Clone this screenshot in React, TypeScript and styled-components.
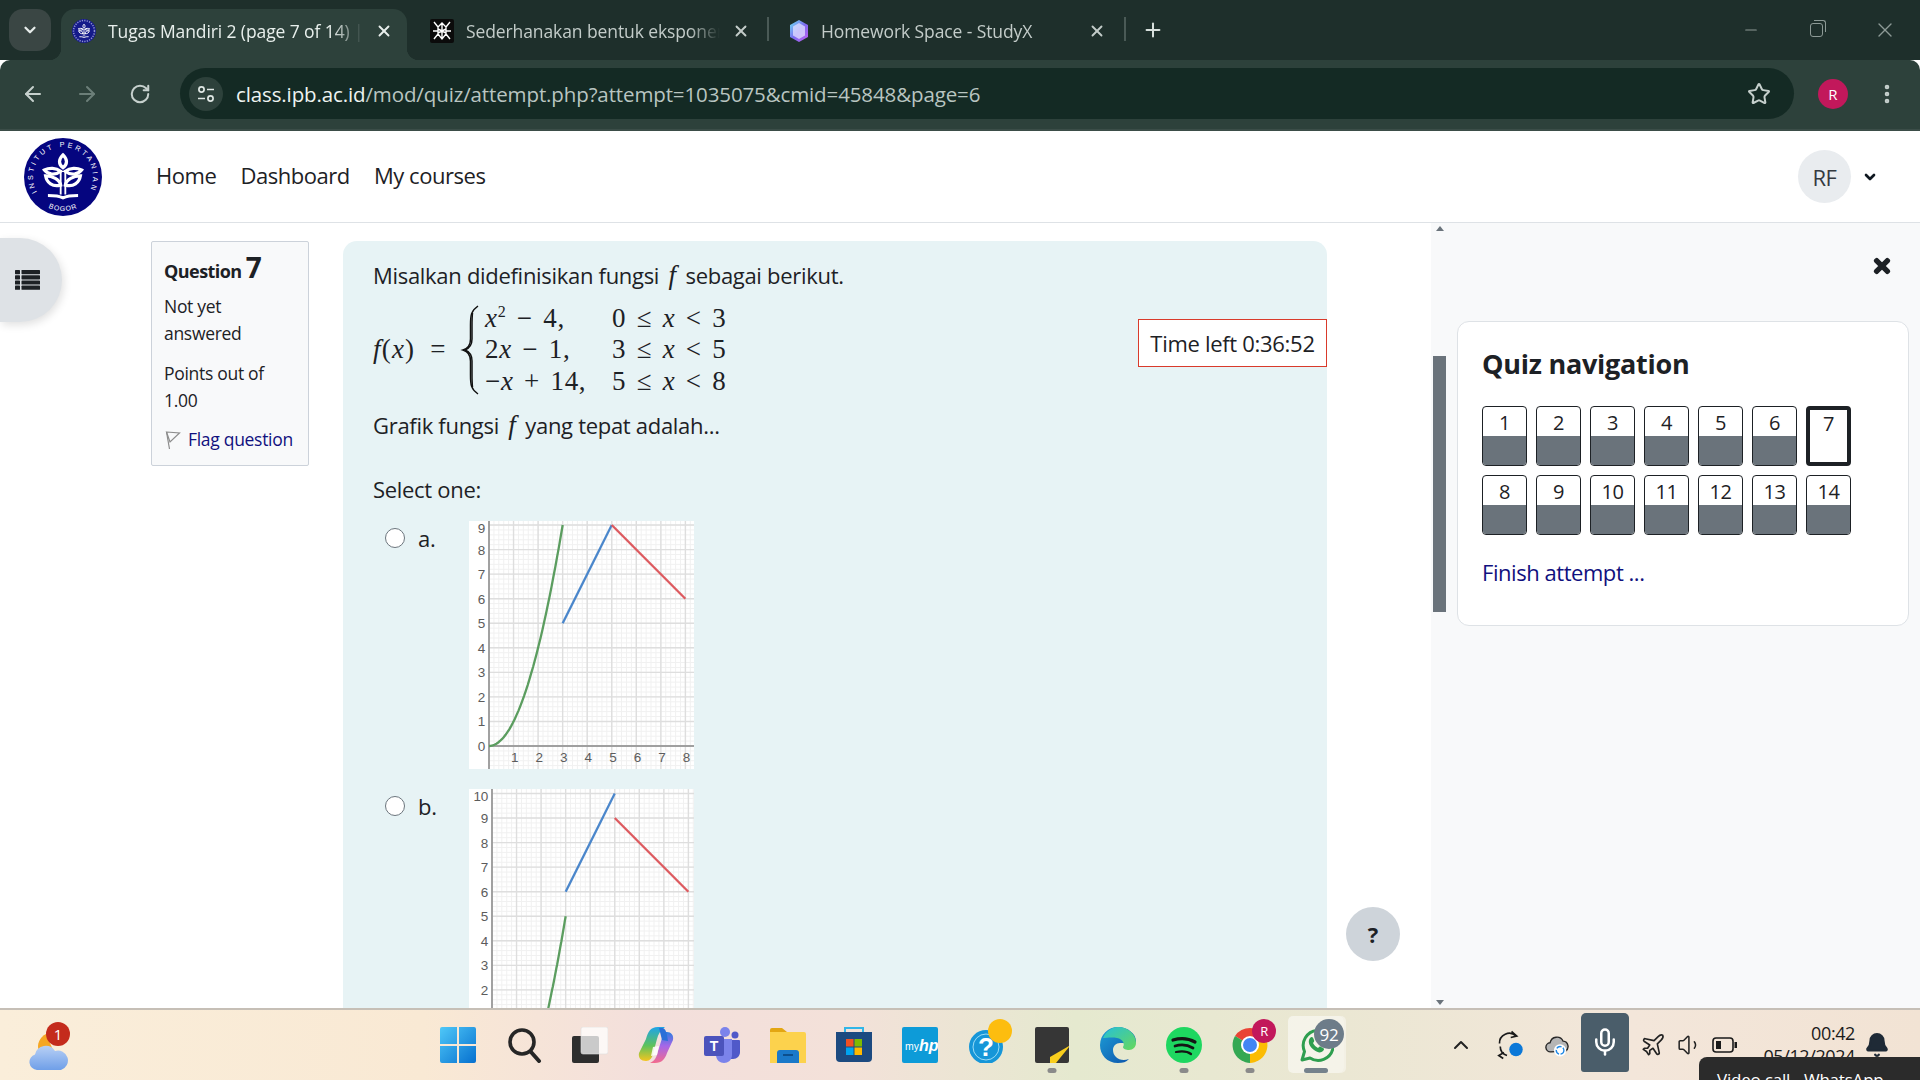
import React from "react";
import styled, { createGlobalStyle } from "styled-components";
import { ArrowLeft, ArrowRight, RotateCw, Star, X, Plus, Minus, EllipsisVertical, ChevronDown, ChevronUp, Mic, Plane, Bell, Volume1 } from "lucide-react";
import { FaTimes } from "react-icons/fa";

const UI = `"Open Sans", "Noto Sans", sans-serif`;
const Global = createGlobalStyle`
  html, body { margin: 0; width: 1920px; height: 1080px; overflow: hidden; background: #fff; }
  #root { width: 1920px; height: 1080px; }
  * { box-sizing: border-box; }
`;
const Screen = styled.div`display:flex;flex-direction:column;width:1920px;height:1080px;font-family:${UI};color:#1d2125;overflow:hidden;`;

/* ---------- browser chrome ---------- */
const TabStrip = styled.div`display:flex;align-items:flex-end;height:60px;background:#1e2f2b;padding-left:9px;position:relative;`;
const TabsMenu = styled.div`width:42px;height:42px;margin:0 10px 9px 0;border-radius:14px;background:#3a4644;display:flex;align-items:center;justify-content:center;color:#e6ecea;`;
const Tab = styled.div<{ $w: number; $pl: number; $pr: number; $active?: boolean }>`
  width:${p => p.$w}px;height:51px;display:flex;align-items:center;padding:0 ${p => p.$pr}px 7px ${p => p.$pl}px;gap:12px;position:relative;
  color:${p => (p.$active ? "#e8efec" : "#c3ccc9")};
  ${p => p.$active ? `background:#2d413b;border-radius:14px 14px 0 0;
    &::before,&::after{content:"";position:absolute;bottom:0;width:12px;height:12px;}
    &::before{left:-12px;background:radial-gradient(circle at 0 0,transparent 12px,#2d413b 12.5px);}
    &::after{right:-12px;background:radial-gradient(circle at 100% 0,transparent 12px,#2d413b 12.5px);}` : ""}
`;
const TabSep = styled.div`width:2px;height:24px;background:#4a5a56;margin-bottom:19px;flex:none;`;
const TabTitle = styled.div`flex:1;min-width:0;white-space:nowrap;overflow:hidden;font-size:17.5px;letter-spacing:-.1px;
  mask-image:linear-gradient(90deg,#000 88%,transparent 100%);`;
const NewTab = styled.div`margin:0 0 19px 16px;color:#d8e0dd;display:flex;`;
const WinBtns = styled.div`margin-left:auto;display:flex;align-items:center;height:60px;color:#8d9a96;padding-right:23px;gap:50px;`;
const RestoreGlyph = styled.div`width:13px;height:14px;border:1.5px solid #8d9a96;border-radius:3px;position:relative;
  &::after{content:"";position:absolute;top:-4px;right:-4px;width:11px;height:11px;border-top:1.5px solid #8d9a96;border-right:1.5px solid #8d9a96;border-radius:0 3px 0 0;}`;

const Toolbar = styled.div`height:71px;background:#2d413b;border-radius:10px 10px 0 0;border-bottom:2px solid #3b4d48;display:flex;align-items:center;padding-bottom:2px;`;
const NavIcons = styled.div`display:flex;align-items:center;gap:30px;padding-left:21px;width:180px;`;
const NavIcon = styled.span<{ $dim?: boolean }>`display:flex;color:${p => (p.$dim ? "#6c7f79" : "#c6d0cd")};`;
const Omnibox = styled.div`width:1614px;height:51px;border-radius:26px;background:#142a24;display:flex;align-items:center;padding:0 23px 0 9px;`;
const SiteBtn = styled.div`width:34px;height:34px;border-radius:50%;background:#2d413b;display:flex;align-items:center;justify-content:center;margin-right:13px;`;
const Url = styled.div`font-size:20.5px;letter-spacing:-.12px;color:#b9c5c1;white-space:nowrap;flex:1;`;
const Host = styled.span`color:#eef3f1;`;
const ProfileDot = styled.div`width:30px;height:30px;border-radius:50%;background:#c2185b;color:#fff;font-size:15px;display:flex;align-items:center;justify-content:center;margin-left:24px;`;
const Kebab = styled.span`display:flex;color:#c6d0cd;margin-left:27px;`;

/* ---------- site header ---------- */
const Header = styled.header`height:92px;border-bottom:1px solid #dee2e6;background:#fff;display:flex;align-items:center;padding:0 42px 0 24px;flex:none;`;
const Menu = styled.nav`display:flex;gap:24px;margin-left:54px;font-size:22px;letter-spacing:-.45px;margin-bottom:4px;`;
const MenuLink = styled.a`color:#1d2125;`;
const UserMenu = styled.div`margin-left:auto;display:flex;align-items:center;gap:11px;`;
const Avatar = styled.div`width:53px;height:53px;border-radius:50%;background:#e9ecef;display:flex;align-items:center;justify-content:center;font-size:22px;letter-spacing:-.5px;color:#343a40;`;

/* ---------- main ---------- */
const Main = styled.main`flex:1;min-height:0;display:flex;overflow:hidden;`;
const Region = styled.section`width:1431px;position:relative;padding:18px 0 0 151px;display:flex;align-items:flex-start;gap:34px;overflow:hidden;`;
const BlocksToggle = styled.div`position:absolute;left:0;top:15px;width:62px;height:84px;border-radius:0 42px 42px 0;background:#dee2e6;box-shadow:2px 3px 8px rgba(0,0,0,.12);display:flex;align-items:center;justify-content:center;padding-right:8px;color:#1d2125;`;
const QInfo = styled.aside`width:158px;height:225px;flex:none;background:#f8f9fa;border:1px solid #ccd2da;border-radius:2px;padding:9px 12px;font-size:17.5px;line-height:27px;letter-spacing:-.3px;`;
const QNo = styled.h3`margin:0 0 6px;font-size:18px;font-weight:700;line-height:32px;letter-spacing:-.55px;`;
const QNum = styled.span`font-size:28px;margin-left:4px;font-weight:700;letter-spacing:0;`;
const QState = styled.p`margin:0 0 13px;`;
const Flag = styled.div`display:flex;align-items:center;gap:6px;color:#10107e;white-space:nowrap;margin-top:-1px;`;

const Panel = styled.article`width:984px;height:900px;flex:none;background:#e7f3f5;border-radius:14px 14px 0 0;position:relative;padding:17px 30px;font-size:22px;letter-spacing:-.3px;line-height:34px;`;
const Para = styled.p`margin:0;`;
const MathF = styled.i`font-family:"Liberation Serif",serif;font-size:27px;margin:0 4px;letter-spacing:0;`;
const Formula = styled.div`display:flex;align-items:center;height:96px;margin:10px 0 10px;font-family:"Liberation Serif",serif;font-size:27px;letter-spacing:.7px;word-spacing:3px;line-height:31.5px;`;
const Lhs = styled.div`width:87px;white-space:nowrap;letter-spacing:1.2px;word-spacing:7px;`;
const Brace = styled.svg`width:22px;height:90px;flex:none;margin-right:3px;`;
const Cases = styled.div`display:grid;grid-template-columns:127px auto;`;
const Sup = styled.sup`font-size:16px;line-height:0;`;
const Timer = styled.div`position:absolute;right:0;top:78px;width:189px;height:48px;background:#fff;border:1.5px solid #d93a2b;display:flex;align-items:center;justify-content:center;padding-bottom:1px;font-size:22px;letter-spacing:-.3px;`;
const SelectOne = styled.div`margin-top:30px;`;
const Answer = styled.div<{ $top: number }>`display:flex;align-items:flex-start;margin-top:${p => p.$top}px;height:auto;`;
const RadioDot = styled.span`width:20px;height:20px;border-radius:50%;background:#fff;border:1.5px solid #6c757d;margin:7px 13px 0 12px;flex:none;`;
const AnsLabel = styled.span`width:51px;flex:none;line-height:34px;font-size:22px;`;
const Chart = styled.svg`background:#fff;display:block;flex:none;`;
const HelpBtn = styled.div`position:absolute;left:1346px;top:684px;width:54px;height:54px;border-radius:50%;background:#ced4da;display:flex;align-items:center;justify-content:center;font-weight:700;font-size:22px;color:#1d2125;`;

/* ---------- drawer ---------- */
const Drawer = styled.aside`width:489px;background:#f8f9fa;display:flex;flex:none;`;
const Scrollbar = styled.div`width:16px;height:100%;display:flex;flex-direction:column;align-items:center;padding:3px 0 3px 1px;flex:none;`;
const ScrollUp = styled.div`width:0;height:0;border-left:4px solid transparent;border-right:4px solid transparent;border-bottom:5px solid #6a737b;`;
const ScrollDown = styled(ScrollUp)`border-bottom:0;border-top:5px solid #6a737b;margin-top:auto;`;
const Thumb = styled.div`width:13px;height:256px;background:#6a737b;margin-top:125px;`;
const DrawerBody = styled.div`flex:1;padding:0 11px 0 10px;`;
const CloseRow = styled.div`height:98px;display:flex;justify-content:flex-end;padding:32px 16px 0 0;color:#1d2125;`;
const NavCard = styled.div`height:305px;border:1.5px solid #dee2e6;border-radius:12px;background:#fff;padding:24px 24px;`;
const NavTitle = styled.h2`margin:0 0 24px;font-size:27px;line-height:36px;font-weight:700;letter-spacing:-.25px;color:#1d2125;`;
const QGrid = styled.div`display:grid;grid-template-columns:repeat(7,45px);gap:9px;`;
const QBtn = styled.div<{ $cur?: boolean }>`height:60px;border:${p => (p.$cur ? "4px" : "1px")} solid #1d2125;border-radius:4px;overflow:hidden;display:flex;flex-direction:column;background:#fff;font-size:20px;letter-spacing:-.5px;`;
const QLabel = styled.div<{ $cur?: boolean }>`height:${p => (p.$cur ? "26px" : "29px")};display:flex;align-items:center;justify-content:center;padding-top:${p => (p.$cur ? "0" : "1px")};`;
const QFill = styled.div<{ $cur?: boolean }>`flex:1;background:${p => (p.$cur ? "#fff" : "#6a737b")};`;
const Finish = styled.a`display:block;margin-top:20px;color:#10107e;font-size:22px;letter-spacing:-.45px;line-height:34px;`;

/* ---------- taskbar ---------- */
const Taskbar = styled.footer`height:72px;flex:none;border-top:2px solid #c6bfb6;position:relative;display:flex;
  background:linear-gradient(90deg,#faeeda 0%,#f9e9d4 22%,#f3dfdc 34%,#f3e1d9 44%,#e5e9cf 56%,#ebe7d3 70%,#f3e6da 85%,#f2e3d4 100%);`;
const WeatherSlot = styled.div`width:440px;padding:14px 0 0 28px;flex:none;`;
const Apps = styled.div`display:flex;gap:30px;padding-top:17px;`;
const AppIcon = styled.div<{ $hover?: boolean }>`width:36px;height:36px;position:relative;flex:none;
  ${p => p.$hover ? `&::before{content:"";position:absolute;left:-10px;right:-10px;top:-11px;height:57px;background:rgba(255,255,255,.5);border-radius:5px;box-shadow:2px 0 0 rgba(255,255,255,.4);}` : ""}
  & > svg{position:relative;display:block;}`;
const Dot = styled.span<{ $wide?: boolean }>`position:absolute;bottom:-10px;left:50%;transform:translateX(-50%);height:5px;border-radius:3px;width:${p => (p.$wide ? "24px" : "9px")};background:${p => (p.$wide ? "#75828c" : "#8a8a8a")};`;
const Badge = styled.span<{ $bg: string; $l: number; $t: number; $d: number; $fs: number }>`position:absolute;left:${p => p.$l}px;top:${p => p.$t}px;width:${p => p.$d}px;height:${p => p.$d}px;border-radius:50%;background:${p => p.$bg};color:#fff;font-size:${p => p.$fs}px;display:flex;align-items:center;justify-content:center;letter-spacing:-.3px;`;
const Tray = styled.div`margin-left:auto;padding-right:22px;display:flex;align-items:center;height:70px;`;
const Slot = styled.div<{ $w: number }>`width:${p => p.$w}px;display:flex;justify-content:center;align-items:center;color:#222;flex:none;`;
const MicBox = styled.div`width:48px;height:59px;margin:-6px 0 0 12px;border-radius:5px 5px 3px 3px;background:#4a5d6a;color:#fff;display:flex;align-items:center;justify-content:center;flex:none;`;
const Clock = styled.div`width:108px;font-size:18px;line-height:23px;text-align:right;letter-spacing:-.4px;color:#1b1b1b;flex:none;margin-top:-1px;`;
const Popup = styled.div`position:absolute;right:0;bottom:0;width:221px;height:23px;background:#2b2b2b;border-radius:8px 0 0 0;color:#fff;font-size:17px;padding:13px 0 0 18px;line-height:20px;overflow:hidden;white-space:nowrap;letter-spacing:-.2px;`;

/* ---------- drawings ---------- */
const LeafMark = () => (
  <g fill="none" stroke="#fff" strokeWidth="2.8" transform="translate(39 39) scale(1.16) translate(-39 -38)">
    <path d="M39 19c-4 4-4 8 0 11 4-3 4-7 0-11z" />
    <path d="M37 33c-4-3-10-3-14-1 3 4 9 5 14 1zM41 33c4-3 10-3 14-1-3 4-9 5-14 1z" />
    <path d="M37 45c-1-5-7-8-13-8 1 6 6 10 13 8zM41 45c1-5 7-8 13-8-1 6-6 10-13 8z" />
    <path d="M37 32v21M41 32v21" strokeWidth="1.6" />
    <path d="M26 54c5 0 9 0 13 2 4-2 8-2 13-2" strokeWidth="2.6" />
  </g>
);
const Logo = () => (
  <svg width="78" height="78" viewBox="0 0 78 78" style={{ flex: "none" }}>
    <circle cx="39" cy="39" r="39" fill="#05057f" />
    <defs>
      <path id="arcTop" d="M13 54A30 30 0 1 1 65 54" />
      <path id="arcBot" d="M19.500 66.900A34 34 0 0 0 58.500 66.900" />
    </defs>
    <text fontFamily="Liberation Sans" fontSize="7.200" fill="#fff" textLength="122">
      <textPath href="#arcTop" textLength="122">INSTITUT PERTANIAN</textPath>
    </text>
    <text fontFamily="Liberation Sans" fontSize="7" fill="#fff" textAnchor="middle" letterSpacing=".8">
      <textPath href="#arcBot" startOffset="50%">BOGOR</textPath>
    </text>
    <LeafMark />
  </svg>
);
const LogoFav = () => (
  <svg width="24" height="24" viewBox="0 0 78 78" style={{ flex: "none" }}>
    <circle cx="39" cy="39" r="39" fill="#151a8a" />
    <circle cx="39" cy="39" r="34" fill="none" stroke="#8f93cf" strokeWidth="5" strokeDasharray="4 4" />
    <LeafMark />
  </svg>
);
const SpiderFav = () => (
  <svg width="24" height="24" viewBox="0 0 24 24" style={{ flex: "none" }}>
    <rect width="24" height="24" fill="#0b0b0b" rx="2" />
    <g stroke="#fff" strokeWidth="1.4" fill="none">
      <path d="M12 4l-4 4v7l4 5 4-5V8zM8 8 4 3M16 8l4-5M8 12H3M16 12h5M8 15l-4 5M16 15l4 5M12 4v16M8 10l8 4M16 10l-8 4" />
    </g>
  </svg>
);
const CubeFav = () => (
  <svg width="20" height="24" viewBox="0 0 20 24" style={{ flex: "none" }}>
    <defs><linearGradient id="cube" x1="0" y1="0" x2="1" y2="1"><stop offset="0" stopColor="#6fe3f2" /><stop offset=".5" stopColor="#7c6cf0" /><stop offset="1" stopColor="#c45cf2" /></linearGradient></defs>
    <path d="M10 1l9 5v12l-9 5-9-5V6z" fill="url(#cube)" />
    <path d="M10 4l6 3.500v9L10 20l-6-3.500v-9z" fill="#e4e2ff" opacity=".75" />
  </svg>
);
const SiteIcon = () => (
  <svg width="20" height="20" viewBox="0 0 20 20" fill="none" stroke="#dfe7e4" strokeWidth="1.700">
    <circle cx="5.500" cy="5.500" r="2.600" /><path d="M11 5.500h7M2 14.500h7" /><circle cx="14.500" cy="14.500" r="2.600" />
  </svg>
);
const FlagIcon = () => (
  <svg width="18" height="26" viewBox="0 0 18 26" fill="none" stroke="#8c8c8c" strokeWidth="1.200" style={{ flex: "none" }}>
    <path d="M2.500 5l3 17" /><path d="M2.500 5l13 1-9.500 9z" />
  </svg>
);
const ListIcon = () => (
  <svg width="25" height="20" viewBox="0 0 25 20" fill="#1d2125">
    {[0, 5.200, 10.400, 15.600].map(y => (
      <g key={y}><rect x="0" y={y} width="5" height="4.200" rx=".6" /><rect x="6.500" y={y} width="18.500" height="4.200" rx=".6" /></g>
    ))}
  </svg>
);
const BraceShape = () => (
  <Brace viewBox="0 0 22 90" fill="none" stroke="#111" >
    <path d="M18 1C11 6 10.500 10 10.500 20V34C10.500 40 8 43.500 3 45 8 46.500 10.500 50 10.500 56V70C10.500 80 11 84 18 89" strokeWidth="1.500" />
    <path d="M12.500 8C12 12 12 16 12 22V34C12 39 10 43 5 45 10 47 12 51 12 56V68C12 74 12 78 12.500 82" strokeWidth="1.500" />
  </Brace>
);

type ChartCfg = { w: number; h: number; ox: number; oy: number; top: number; curve: string; blue: string; red: string; xLabels?: boolean };
const UX = 24.55, UY = 24.55;
const GraphChart: React.FC<ChartCfg> = ({ w, h, ox, oy, top, curve, blue, red, xLabels }) => {
  const minorV: number[] = [], minorH: number[] = [], majorV: number[] = [], majorH: number[] = [];
  for (let i = 0; i < 55; i++) { minorV.push(ox + (i * UX) / 5); if (i % 5 === 0) majorV.push(ox + (i * UX) / 5); }
  for (let i = -10; i < 60; i++) { minorH.push(oy - (i * UY) / 5); if (i % 5 === 0) majorH.push(oy - (i * UY) / 5); }
  const gx = (x: number) => ox + x * UX, gy = (y: number) => oy - y * UY;
  const path = (fn: (t: number) => number, a: number, b: number) => {
    let d = "";
    for (let i = 0; i <= 40; i++) { const x = a + ((b - a) * i) / 40; d += `${i ? "L" : "M"}${gx(x).toFixed(1)} ${gy(fn(x)).toFixed(1)}`; }
    return d;
  };
  const isA = curve === "a";
  const ticks = Array.from({ length: top + 1 }, (_, i) => i).filter(i => isA || i >= 2);
  return (
    <Chart width={w} height={h} viewBox={`0 0 ${w} ${h}`}>
      {minorV.map(v => <line key={"a" + v} x1={v} x2={v} y1={0} y2={h} stroke="#f1f1f1" />)}
      {minorH.map(v => <line key={"b" + v} x1={ox} x2={w} y1={v} y2={v} stroke="#f1f1f1" />)}
      {majorV.map(v => <line key={"c" + v} x1={v} x2={v} y1={0} y2={h} stroke="#dedede" strokeWidth="1.400" />)}
      {majorH.map(v => <line key={"d" + v} x1={ox} x2={w} y1={v} y2={v} stroke="#dedede" strokeWidth="1.400" />)}
      <line x1={ox} x2={ox} y1={0} y2={h} stroke="#8a8a8a" strokeWidth="1.500" />
      <line x1={ox} x2={w} y1={oy} y2={oy} stroke="#8a8a8a" strokeWidth="1.500" />
      {ticks.map(i => (
        <text key={i} x={ox - 4} y={Math.max(gy(i) + 5, 12)} textAnchor="end" fontFamily="Liberation Sans" fontSize="13.500" fill="#5c5c5c">{i}</text>
      ))}
      {xLabels && [1, 2, 3, 4, 5, 6, 7, 8].map(i => (
        <text key={i} x={gx(i) + 1} y={oy + 16} textAnchor="middle" fontFamily="Liberation Sans" fontSize="13.500" fill="#5c5c5c">{i}</text>
      ))}
      {isA
        ? <path d={path(x => x * x, 0, 3)} fill="none" stroke="#5b9d5f" strokeWidth="2.300" />
        : <path d={path(x => x * x - 4, 2, 3)} fill="none" stroke="#5b9d5f" strokeWidth="2.300" />}
      <path d={blue} fill="none" stroke="#4a86cb" strokeWidth="2.300" />
      <path d={red} fill="none" stroke="#dd5a5f" strokeWidth="2.300" />
    </Chart>
  );
};

const WeatherIcon = () => (
  <svg width="42" height="52" viewBox="0 0 42 52">
    <defs><linearGradient id="cl" x1="0" y1="0" x2="0" y2="1"><stop offset="0" stopColor="#b8d0f5" /><stop offset="1" stopColor="#6f9fe8" /></linearGradient></defs>
    <path d="M18 10c-6 3-10 10-7 18l14-2z" fill="#f6a723" />
    <path d="M9 46a8 8 0 0 1-2-15.600A11 11 0 0 1 27 27a8 8 0 0 1 6 19z" fill="url(#cl)" />
  </svg>
);
const WinIcon = () => (
  <svg width="36" height="36" viewBox="0 0 36 36">
    <defs><linearGradient id="wg" x1="0" y1="0" x2="1" y2="1"><stop offset="0" stopColor="#4fc8f8" /><stop offset="1" stopColor="#0670cf" /></linearGradient></defs>
    <path d="M0 2a2 2 0 0 1 2-2h15v17H0zM19 0h15a2 2 0 0 1 2 2v15H19zM0 19h17v17H2a2 2 0 0 1-2-2zM19 19h17v15a2 2 0 0 1-2 2H19z" fill="url(#wg)" />
  </svg>
);
const SearchIcon = () => (
  <svg width="36" height="36" viewBox="0 0 36 36" fill="none" stroke="#262626"><circle cx="16" cy="15" r="12" strokeWidth="3.600" /><path d="M25 25l8 9" strokeWidth="4" strokeLinecap="round" /></svg>
);
const TaskViewIcon = () => (
  <svg width="36" height="36" viewBox="0 0 36 36"><rect x="0" y="9" width="27" height="27" rx="2" fill="#2e2e2e" /><rect x="9" y="0" width="27" height="27" rx="2" fill="#fff" fillOpacity=".75" stroke="#ddd" strokeWidth=".6" /></svg>
);
const CopilotIcon = () => (
  <svg width="36" height="36" viewBox="0 0 36 36">
    <defs>
      <linearGradient id="cp1" x1="0" y1="0" x2="0" y2="1"><stop offset="0" stopColor="#1ea4e9" /><stop offset=".55" stopColor="#5fc25b" /><stop offset="1" stopColor="#f4c51f" /></linearGradient>
      <linearGradient id="cp2" x1="0" y1="0" x2="0" y2="1"><stop offset="0" stopColor="#2b7de0" /><stop offset=".45" stopColor="#a667e8" /><stop offset="1" stopColor="#f36b8d" /></linearGradient>
    </defs>
    <path d="M20 0C12 0 10 5 8 12L1 26c-1 5 2 8 7 8 4 0 6-3 7-7l4-15c1-5 4-9 8-12z" fill="url(#cp1)" />
    <path d="M17 36c7 0 10-4 12-10l6-13c1-5-2-8-6-8h-3L20 24c-1 5-3 10-8 12z" fill="url(#cp2)" />
    <path d="M21 1h3c3 0 4 3 5 7l1 6-6-1z" fill="#2a6fd8" />
    <path d="M15 20l6-1-2 9-6 1z" fill="#fff" opacity=".85" />
  </svg>
);
const TeamsIcon = () => (
  <svg width="36" height="36" viewBox="0 0 36 36">
    <circle cx="21" cy="5" r="5" fill="#7b83eb" /><circle cx="31" cy="8" r="3.500" fill="#5059c9" />
    <path d="M26 13h9a1 1 0 0 1 1 1v11c0 4-3 7-7 7h-3z" fill="#5059c9" />
    <path d="M12 12h16v16c0 5-4 8-8 8s-8-3-8-8z" fill="#7b83eb" />
    <rect x="0" y="9" width="20" height="20" rx="2" fill="#4b53bc" />
    <text x="10" y="24" textAnchor="middle" fontFamily="Liberation Sans" fontWeight="700" fontSize="14" fill="#fff">T</text>
  </svg>
);
const FilesIcon = () => (
  <svg width="36" height="36" viewBox="0 0 36 36">
    <path d="M0 3a2 2 0 0 1 2-2h10l5 4H0z" fill="#e3a612" />
    <path d="M0 5h34a2 2 0 0 1 2 2v29H0z" fill="#fcd24d" />
    <path d="M7 36V26a3 3 0 0 1 3-3h16a3 3 0 0 1 3 3v10z" fill="#1a79c9" />
    <rect x="13" y="27" width="10" height="2" fill="#0c4f8c" />
  </svg>
);
const StoreIcon = () => (
  <svg width="36" height="36" viewBox="0 0 36 36">
    <path d="M9 5V1h18v4" fill="none" stroke="#31b6e8" strokeWidth="2" />
    <path d="M0 5h36v26a4 4 0 0 1-4 4H4a4 4 0 0 1-4-4z" fill="#1c4a80" />
    <rect x="10" y="12" width="7.500" height="7.500" fill="#f25022" /><rect x="18.500" y="12" width="7.500" height="7.500" fill="#7fba00" />
    <rect x="10" y="20.500" width="7.500" height="7.500" fill="#00a4ef" /><rect x="18.500" y="20.500" width="7.500" height="7.500" fill="#ffb900" />
  </svg>
);
const HpIcon = () => (
  <svg width="36" height="36" viewBox="0 0 36 36">
    <rect width="36" height="36" rx="2" fill="#0d9bd8" />
    <text x="3" y="23" fontFamily="Liberation Sans" fontSize="10.500" fill="#fff">my</text>
    <text x="17" y="24" fontFamily="Liberation Sans" fontStyle="italic" fontWeight="700" fontSize="16" fill="#fff">hp</text>
  </svg>
);
const HelpIcon = () => (
  <svg width="36" height="36" viewBox="0 0 36 36">
    <circle cx="18" cy="20" r="17" fill="#1696d8" />
    <circle cx="18" cy="20" r="13" fill="none" stroke="#9adcf5" strokeWidth="1" />
    <text x="18" y="29" textAnchor="middle" fontFamily="Liberation Sans" fontWeight="700" fontSize="26" fill="#fff">?</text>
  </svg>
);
const StickyIcon = () => (
  <svg width="36" height="36" viewBox="0 0 36 36"><path d="M3 0h30a2 2 0 0 1 2 2v32a2 2 0 0 1-2 2H3a2 2 0 0 1-2-2V2a2 2 0 0 1 2-2z" fill="#363636" /><path d="M16 36V30L35 19V20L22 36z" fill="#f9ce1d" /></svg>
);
const EdgeIcon = () => (
  <svg width="36" height="36" viewBox="0 0 36 36">
    <defs>
      <linearGradient id="eg1" x1="0" y1="0" x2="1" y2="1"><stop offset="0" stopColor="#26c0d8" /><stop offset="1" stopColor="#67d85a" /></linearGradient>
      <linearGradient id="eg2" x1="0" y1="0" x2="1" y2="1"><stop offset="0" stopColor="#1ea0d8" /><stop offset="1" stopColor="#0c4fa8" /></linearGradient>
    </defs>
    <path d="M18 0A18 18 0 0 0 0 18c0 10 7 18 18 18 5 0 8-1 11-4-9 3-16-2-16-9 0-4 3-7 7-7s8 1 8 2c4 0 8-1 8-4C36 7 28 0 18 0z" fill="url(#eg2)" />
    <path d="M3 11C6 4 12 0 18 0c10 0 18 7 18 16 0 4-3 7-7 7-3 0-6-1-6-3 2-3 0-8-6-9-5-1-11 0-14 0z" fill="url(#eg1)" />
  </svg>
);
const SpotifyIcon = () => (
  <svg width="36" height="36" viewBox="0 0 36 36" fill="none" stroke="#141414" strokeLinecap="round">
    <circle cx="18" cy="18" r="18" fill="#1ed760" stroke="none" />
    <path d="M7 13c7-2 15-2 22 2" strokeWidth="3.200" /><path d="M9 19c6-2 13-1 18 2" strokeWidth="2.700" /><path d="M10 25c5-1 11-1 15 2" strokeWidth="2.200" />
  </svg>
);
const ChromeIcon = () => (
  <svg width="36" height="36" viewBox="0 0 36 36">
    <path d="M18 18L3 9A18 18 0 0 1 33 9z" fill="#ea4335" />
    <path d="M18 18L3 9A18 18 0 0 0 18 36z" fill="#34a853" />
    <path d="M18 18L18 36A18 18 0 0 0 33 9z" fill="#fbbc04" />
    <circle cx="18" cy="18" r="9" fill="#fff" /><circle cx="18" cy="18" r="7" fill="#4285f4" />
  </svg>
);
const WhatsIcon = () => (
  <svg width="36" height="36" viewBox="0 0 36 36" fill="none">
    <path d="M4 33l2.500-8.500A15 15 0 1 1 12 31z" stroke="#2e9e4f" strokeWidth="3" strokeLinejoin="round" />
    <path d="M12 11c2-2 3-1 4 2 .5 1 0 2-1 3 1 2 3 4 5 5 1-1 2-2 3-1 3 1 4 2 2 4-2 2-5 2-9-1s-7-8-4-12z" fill="#2e9e4f" />
  </svg>
);
const RefreshTray = () => (
  <svg width="28" height="30" viewBox="0 0 36 40" fill="none" stroke="#1a1a1a" strokeWidth="2.200">
    <path d="M4 18A13 13 0 0 1 26 8" /><path d="M20 2l7 6-8 2" />
    <path d="M5 22c0 5 3 10 9 12" /><path d="M9 38l-6-4 7-4" />
    <circle cx="26" cy="26" r="9" fill="#0b78d8" stroke="none" />
  </svg>
);
const CloudTray = () => (
  <svg width="26" height="26" viewBox="0 0 30 34">
    <path d="M7 26a6 6 0 0 1-1-12 9 9 0 0 1 17-2 7 7 0 0 1 3 13z" fill="#b5b5b5" stroke="#262626" strokeWidth="1.800" />
    <circle cx="19" cy="24" r="8" fill="#fff" /><circle cx="19" cy="24" r="5" fill="none" stroke="#1e88e5" strokeWidth="1.800" strokeDasharray="7 2" />
  </svg>
);
const BatteryTray = () => (
  <svg width="26" height="18" viewBox="0 0 26 18" fill="none">
    <rect x="1" y="2" width="20" height="14" rx="3" stroke="#1a1a1a" strokeWidth="1.600" />
    <rect x="4" y="5" width="5" height="8" fill="#1a1a1a" /><rect x="22.500" y="6" width="2.500" height="6" fill="#1a1a1a" />
  </svg>
);

const Qs = Array.from({ length: 14 }, (_, i) => i + 1);
const px = (ox: number, x: number) => ox + x * UX;
const py = (oy: number, y: number) => oy - y * UY;

export default function App() {
  return (
    <Screen>
      <Global />
      <TabStrip>
        <TabsMenu><ChevronDown size={18} strokeWidth={3} /></TabsMenu>
        <Tab $w={346} $pl={11} $pr={14} $active>
          <LogoFav />
          <TabTitle>Tugas Mandiri 2 (page 7 of 14) |</TabTitle>
          <X size={18} strokeWidth={2.5} />
        </Tab>
        <Tab $w={360} $pl={23} $pr={17}>
          <SpiderFav />
          <TabTitle>Sederhanakan bentuk eksponen</TabTitle>
          <X size={18} strokeWidth={2.5} />
        </Tab>
        <TabSep />
        <Tab $w={355} $pl={20} $pr={18}>
          <CubeFav />
          <TabTitle>Homework Space - StudyX</TabTitle>
          <X size={18} strokeWidth={2.5} />
        </Tab>
        <TabSep />
        <NewTab><Plus size={22} strokeWidth={2.2} /></NewTab>
        <WinBtns>
          <Minus size={18} strokeWidth={1.6} />
          <RestoreGlyph />
          <X size={24} strokeWidth={1.4} />
        </WinBtns>
      </TabStrip>
      <Toolbar>
        <NavIcons>
          <NavIcon><ArrowLeft size={24} strokeWidth={2} /></NavIcon>
          <NavIcon $dim><ArrowRight size={24} strokeWidth={2} /></NavIcon>
          <NavIcon><RotateCw size={22} strokeWidth={2.2} /></NavIcon>
        </NavIcons>
        <Omnibox>
          <SiteBtn><SiteIcon /></SiteBtn>
          <Url><Host>class.ipb.ac.id</Host>/mod/quiz/attempt.php?attempt=1035075&amp;cmid=45848&amp;page=6</Url>
          <NavIcon><Star size={24} strokeWidth={2} /></NavIcon>
        </Omnibox>
        <ProfileDot>R</ProfileDot>
        <Kebab><EllipsisVertical size={24} strokeWidth={2.6} /></Kebab>
      </Toolbar>
      <Header>
        <Logo />
        <Menu>
          <MenuLink>Home</MenuLink>
          <MenuLink>Dashboard</MenuLink>
          <MenuLink>My courses</MenuLink>
        </Menu>
        <UserMenu>
          <Avatar>RF</Avatar>
          <ChevronDown size={16} strokeWidth={4} color="#0f1720" />
        </UserMenu>
      </Header>
      <Main>
        <Region>
          <BlocksToggle><ListIcon /></BlocksToggle>
          <QInfo>
            <QNo>Question<QNum>7</QNum></QNo>
            <QState>Not yet<br />answered</QState>
            <QState>Points out of<br />1.00</QState>
            <Flag><FlagIcon />Flag question</Flag>
          </QInfo>
          <Panel>
            <Timer>Time left 0:36:52</Timer>
            <Para>Misalkan didefinisikan fungsi <MathF>f</MathF> sebagai berikut.</Para>
            <Formula>
              <Lhs><i>f</i>(<i>x</i>) =</Lhs>
              <BraceShape />
              <Cases>
                <div><i>x</i><Sup>2</Sup> − 4,</div><div>0 ≤ <i>x</i> &lt; 3</div>
                <div>2<i>x</i> − 1,</div><div>3 ≤ <i>x</i> &lt; 5</div>
                <div>−<i>x</i> + 14,</div><div>5 ≤ <i>x</i> &lt; 8</div>
              </Cases>
            </Formula>
            <Para>Grafik fungsi <MathF>f</MathF> yang tepat adalah...</Para>
            <SelectOne>Select one:</SelectOne>
            <Answer $top={15}>
              <RadioDot />
              <AnsLabel>a.</AnsLabel>
              <GraphChart w={225} h={248} ox={20} oy={225} top={9} curve="a" xLabels
                blue={`M${px(20, 3)} ${py(225, 5)}L${px(20, 5)} ${py(225, 9)}`}
                red={`M${px(20, 5)} ${py(225, 9)}L${px(20, 8)} ${py(225, 6)}`} />
            </Answer>
            <Answer $top={20}>
              <RadioDot />
              <AnsLabel>b.</AnsLabel>
              <GraphChart w={225} h={280} ox={23} oy={250} top={10} curve="b"
                blue={`M${px(23, 3)} ${py(250, 6)}L${px(23, 5)} ${py(250, 10)}`}
                red={`M${px(23, 5)} ${py(250, 9)}L${px(23, 8)} ${py(250, 6)}`} />
            </Answer>
          </Panel>
          <HelpBtn>?</HelpBtn>
        </Region>
        <Drawer>
          <Scrollbar>
            <ScrollUp />
            <Thumb />
            <ScrollDown />
          </Scrollbar>
          <DrawerBody>
            <CloseRow><FaTimes size={22} stroke="currentColor" strokeWidth={30} /></CloseRow>
            <NavCard>
              <NavTitle>Quiz navigation</NavTitle>
              <QGrid>
                {Qs.map(n => (
                  <QBtn key={n} $cur={n === 7}>
                    <QLabel $cur={n === 7}>{n}</QLabel>
                    <QFill $cur={n === 7} />
                  </QBtn>
                ))}
              </QGrid>
              <Finish>Finish attempt ...</Finish>
            </NavCard>
          </DrawerBody>
        </Drawer>
      </Main>
      <Taskbar>
        <WeatherSlot>
          <AppIcon>
            <WeatherIcon />
            <Badge $bg="#c42b1c" $l={18} $t={-2} $d={24} $fs={15}>1</Badge>
          </AppIcon>
        </WeatherSlot>
        <Apps>
          <AppIcon><WinIcon /></AppIcon>
          <AppIcon><SearchIcon /></AppIcon>
          <AppIcon><TaskViewIcon /></AppIcon>
          <AppIcon><CopilotIcon /></AppIcon>
          <AppIcon><TeamsIcon /></AppIcon>
          <AppIcon><FilesIcon /></AppIcon>
          <AppIcon><StoreIcon /></AppIcon>
          <AppIcon><HpIcon /></AppIcon>
          <AppIcon><HelpIcon /><Badge $bg="#fdbd0f" $l={20} $t={-8} $d={24} $fs={1} /></AppIcon>
          <AppIcon><StickyIcon /><Dot /></AppIcon>
          <AppIcon><EdgeIcon /></AppIcon>
          <AppIcon><SpotifyIcon /><Dot /></AppIcon>
          <AppIcon><ChromeIcon /><Dot /><Badge $bg="#c2185b" $l={20} $t={-8} $d={24} $fs={13}>R</Badge></AppIcon>
          <AppIcon $hover><WhatsIcon /><Dot $wide /><Badge $bg="#6d7c89" $l={16} $t={-8} $d={30} $fs={17}>92</Badge></AppIcon>
        </Apps>
        <Tray>
          <Slot $w={28}><ChevronUp size={24} strokeWidth={2} /></Slot>
          <Slot $w={70}><RefreshTray /></Slot>
          <Slot $w={24}><CloudTray /></Slot>
          <MicBox><Mic size={30} strokeWidth={2} /></MicBox>
          <Slot $w={48}><Plane size={26} strokeWidth={1.5} /></Slot>
          <Slot $w={26}><Volume1 size={26} strokeWidth={1.4} /></Slot>
          <Slot $w={44}><BatteryTray /></Slot>
          <Clock>00:42<br />05/12/2024</Clock>
          <Slot $w={43}><Bell size={26} fill="#1f2a36" color="#1f2a36" /></Slot>
        </Tray>
        <Popup>Video call - WhatsApp</Popup>
      </Taskbar>
    </Screen>
  );
}
